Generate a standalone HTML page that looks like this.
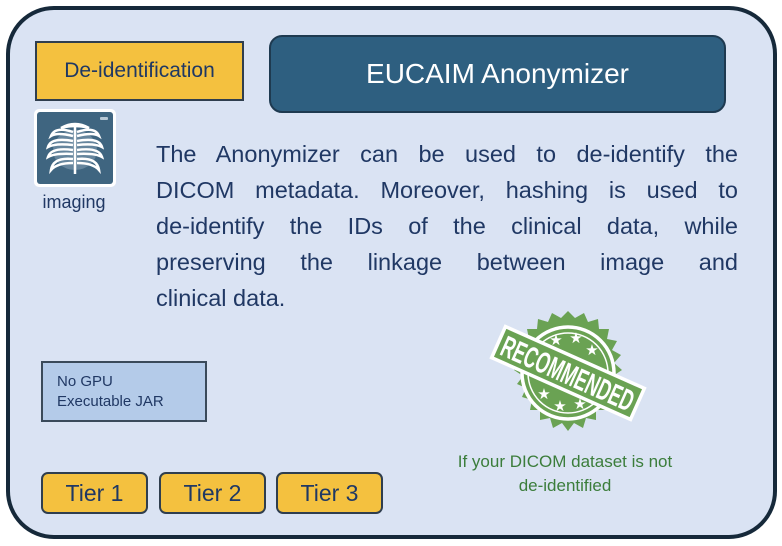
<!DOCTYPE html>
<html><head><style>
*{margin:0;padding:0;box-sizing:border-box}
body{width:782px;height:546px;background:#fff;position:relative;overflow:hidden;font-family:"Liberation Sans",sans-serif}
.card{position:absolute;left:6px;top:6px;width:771px;height:533px;border:4px solid #16293a;border-radius:48px;background:#dae3f3}
.abs{position:absolute}
.deid{left:35px;top:41px;width:209px;height:60px;background:#f4c13f;border:2px solid #2f3e4e;color:#1f3864;font-size:21px;line-height:56px;text-align:center}
.title{left:269px;top:35px;width:457px;height:78px;background:#2e5f80;border:2px solid #1e3a50;border-radius:13px;color:#fff;font-size:28px;line-height:74px;text-align:center}
.para{left:156px;top:136px;width:582px;color:#203864;font-size:23.5px;line-height:36px}
.para span{display:block;text-align:justify;text-align-last:justify;white-space:nowrap}
.para span.l{text-align-last:left}
.img{left:34px;top:109px;width:82px;height:78px;background:#fff;border-radius:5px;padding:3px}
.img div{width:100%;height:100%;background:#3f6580;border-radius:3px;position:relative}
.imaging{left:30px;top:192px;width:88px;text-align:center;color:#203864;font-size:18px}
.spec{left:41px;top:361px;width:166px;height:61px;background:#b4cbe9;border:2px solid #3a4a5a;color:#203864;font-size:15px;line-height:20px;padding:9px 0 0 14px}
.tier{top:472px;width:107px;height:42px;background:#f4c13f;border:2px solid #2f3e4e;border-radius:7px;color:#1f3864;font-size:23px;line-height:38px;text-align:center}
.green{left:415px;top:450px;width:300px;text-align:center;color:#3b7d3b;font-size:17px;line-height:24px}
</style></head><body>
<div class="card"></div>
<div class="abs deid">De-identification</div>
<div class="abs title">EUCAIM Anonymizer</div>
<div class="abs img"><div>
<svg width="76" height="72" viewBox="0 0 76 72" style="position:absolute;left:0;top:0">
<rect x="63" y="5" width="8" height="3" rx="1" fill="#b8c8d4"/>
<ellipse cx="38" cy="38" rx="22" ry="20" fill="#7f9bb0" opacity="0.6"/>
<g fill="none" stroke="#fff" stroke-width="2.5">
<line x1="38" y1="12" x2="38" y2="62"/>
<path d="M24 16 Q38 8 52 16 Q38 12 24 16Z"/>
<path d="M36 20 Q18 14 14 24 Q20 20 36 24"/>
<path d="M40 20 Q58 14 62 24 Q56 20 40 24"/>
<path d="M36 29 Q14 25 11 35 Q18 31 36 33"/>
<path d="M40 29 Q62 25 65 35 Q58 31 40 33"/>
<path d="M36 38 Q14 35 11 45 Q18 41 36 42"/>
<path d="M40 38 Q62 35 65 45 Q58 41 40 42"/>
<path d="M36 47 Q16 45 14 58 Q20 51 36 51"/>
<path d="M40 47 Q60 45 62 58 Q56 51 40 51"/>
</g></svg></div></div>
<div class="abs imaging">imaging</div>
<div class="abs para"><span>The Anonymizer can be used to de-identify the</span><span>DICOM metadata. Moreover, hashing is used to</span><span>de-identify the IDs of the clinical data, while</span><span>preserving the linkage between image and</span><span class="l">clinical data.</span></div>
<div class="abs spec">No GPU<br>Executable JAR</div>
<div class="abs tier" style="left:41px">Tier 1</div>
<div class="abs tier" style="left:159px">Tier 2</div>
<div class="abs tier" style="left:276px">Tier 3</div>
<svg class="abs" style="left:488px;top:303px" width="160" height="140" viewBox="0 0 160 140">
<g transform="translate(80 70)">
<polygon fill="#6aa253" points="0,-62 7,-55 16,-60 20,-51 30,-54 31,-44 41,-44 39,-34 49,-32 44,-23 53,-18 46,-10 54,-3 45,3 51,11 42,15 46,24 36,27 38,37 28,37 28,47 18,45 15,55 6,50 0,58 -6,50 -15,55 -18,45 -28,47 -28,37 -38,37 -36,27 -46,24 -42,15 -51,11 -45,3 -54,-3 -46,-10 -53,-18 -44,-23 -49,-32 -39,-34 -41,-44 -31,-44 -30,-54 -20,-51 -16,-60 -7,-55"/>
<circle r="46" fill="none" stroke="#fff" stroke-width="3.5"/>
<circle r="40" fill="#6aa253" stroke="#fff" stroke-width="1.5"/>
<g transform="rotate(24)">
<rect x="-76" y="-17" width="152" height="34" fill="#6aa253" stroke="#fff" stroke-width="3.5"/>
<text x="0" y="11" text-anchor="middle" fill="#fff" font-family="Liberation Sans Narrow,Liberation Sans,sans-serif" font-weight="bold" font-size="30" textLength="142" lengthAdjust="spacingAndGlyphs">RECOMMENDED</text>
</g>
<g fill="#fff" font-size="15" font-family="DejaVu Sans,sans-serif" text-anchor="middle">
<text x="-12" y="-28">★</text><text x="8" y="-30">★</text><text x="24" y="-18">★</text>
<text x="-24" y="26">★</text><text x="-8" y="38">★</text><text x="12" y="36">★</text>
</g>
</g>
</svg>
<div class="abs green">If your DICOM dataset is not<br>de-identified</div>
</body></html>
